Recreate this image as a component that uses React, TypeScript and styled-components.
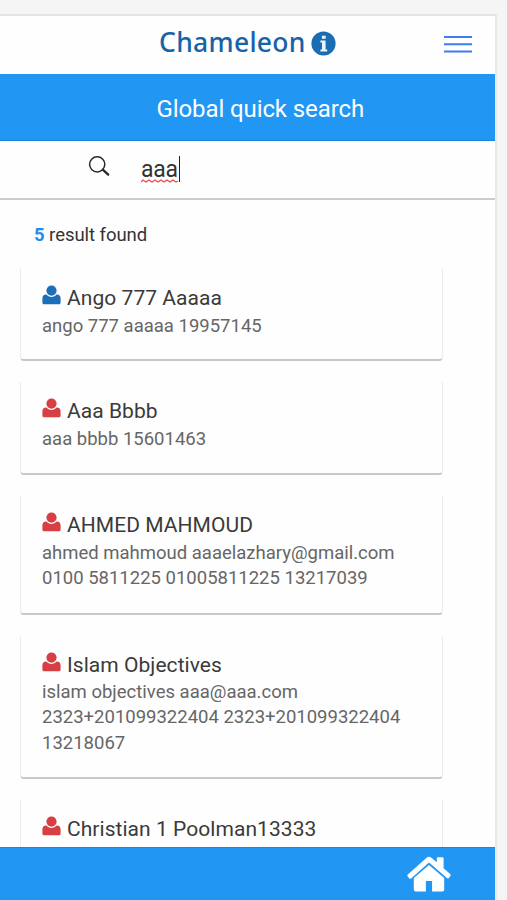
import React from 'react';
import styled, { createGlobalStyle } from 'styled-components';

const GlobalStyle = createGlobalStyle`
  * { box-sizing: border-box; }
  body { margin: 0; background: #f5f5f5; font-family: Roboto, "Liberation Sans", sans-serif; overflow: hidden; }
`;

const Page = styled.div`
  height: 900px;
  width: 507px;
  padding-top: 14px;
  background: #f5f5f5;
`;

const Phone = styled.main`
  width: 497px;
  height: 886px;
  border-top: 2px solid #e5e5e5;
  border-right: 2px solid #e8e8e8;
  background: #fefefe;
  display: flex;
  flex-direction: column;
`;

const Header = styled.header`
  height: 58px;
  flex: none;
  display: flex;
  align-items: center;
  padding: 0 23px 2px 159px;
`;

const Brand = styled.div`
  display: flex;
  align-items: center;
  gap: 5px;
  width: 180px;
`;

const BrandName = styled.span`
  width: 147px;
  margin-top: -4px;
  font: 500 26.5px/36px "Noto Sans", sans-serif;
  letter-spacing: 0.3px;
  color: #1663a8;
  white-space: nowrap;
`;

const MenuButton = styled.button`
  margin: 2px 0 0 auto;
  padding: 0;
  border: 0;
  background: none;
  display: flex;
`;

const TitleBar = styled.h1`
  margin: 0;
  height: 67px;
  flex: none;
  background: #2196f3;
  border-bottom: 1px solid #1a83dc;
  color: #fff;
  font-size: 24px;
  letter-spacing: -0.1px;
  line-height: 70px;
  font-weight: 400;
  padding-left: 156.5px;
  white-space: nowrap;
`;

const SearchBar = styled.div`
  height: 59px;
  flex: none;
  border-bottom: 2px solid #cccccc;
  display: flex;
  align-items: flex-start;
  padding: 15px 0 0 88px;
  > svg { margin-top: -1px; }
`;

const Query = styled.div`
  display: flex;
  flex-direction: column;
  margin-left: 31px;
  width: 40px;
`;

const QueryText = styled.span`
  height: 26px;
  width: 39px;
  border-right: 1px solid #222;
  font-size: 23px;
  letter-spacing: -0.2px;
  line-height: 28px;
  color: #333;
`;

const Squiggle = styled.svg`
  margin-top: -3px;
  display: block;
`;

const Count = styled.p`
  margin: 0;
  height: 68px;
  flex: none;
  padding-left: 34px;
  font-size: 18.5px;
  letter-spacing: -0.05px;
  line-height: 70px;
  color: #333;
  b { color: #1e8df0; font-weight: 700; }
`;

const Results = styled.ul`
  list-style: none;
  margin: 0;
  padding: 0 0 0 20px;
  flex: 1;
  min-height: 0;
  overflow: hidden;
  display: flex;
  flex-direction: column;
  gap: 21px;
`;

const Card = styled.li<{ $height: number }>`
  width: 423px;
  height: ${(p) => p.$height}px;
  flex: none;
  border: solid #ececec;
  border-width: 0 1px 2px 1px;
  border-bottom-color: #c8c8c8;
  border-radius: 0 0 4px 4px;
  padding: 15px 0 0 21px;

  &:first-child { padding-top: 16px; }
`;

const Name = styled.h2<{ $tone: string; $gap: number }>`
  margin: 0 0 ${(p) => p.$gap}px;
  height: 29px;
  display: flex;
  align-items: flex-start;
  gap: 6px;
  font-size: 21px;
  letter-spacing: 0.05px;
  line-height: 28px;
  font-weight: 400;
  color: #3a3a3a;
  white-space: nowrap;
  svg { color: ${(p) => p.$tone}; margin-top: 1px; }
`;

const Detail = styled.p`
  margin: 0;
  font-size: 18.5px;
  line-height: 25.3px;
  color: #666;
  white-space: nowrap;
`;

const Footer = styled.footer`
  height: 53px;
  flex: none;
  background: #2196f3;
  border-top: 1px solid #1a86df;
  display: flex;
  justify-content: flex-end;
  align-items: flex-start;
  padding: 8px 43px 0 0;
`;

const InfoIcon = () => (
  <svg width="26" height="26" viewBox="0 0 26 26">
    <circle cx="12.5" cy="12.5" r="12.1" fill="#1b6db3" />
    <path d="M10.9 4.8h3.8v3h-3.8zM9.4 9.6h5.2v9h1.6v2H9.4v-2H11v-7H9.4z" fill="#e6f5ff" />
  </svg>
);

const MenuIcon = () => (
  <svg width="28" height="20" viewBox="0 0 28 20" fill="#3f7cf0">
    <path d="M0 1h28v2H0zM0 8.2h28v2H0zM0 15.4h28v2H0z" />
  </svg>
);

const SearchIcon = () => (
  <svg width="22" height="22" viewBox="0 0 22 22" fill="none" stroke="#292929">
    <circle cx="9.2" cy="9.3" r="7.6" strokeWidth="1.5" />
    <path d="M14.8 14.6l5.4 5" strokeWidth="2.3" strokeLinecap="round" />
  </svg>
);

const PersonIcon = () => (
  <svg width="19" height="20" viewBox="0 0 19 20" fill="currentColor">
    <circle cx="9.5" cy="5.6" r="5.1" />
    <path d="M4 9.5h.5c1.2 1.6 2.9 2.5 5 2.5s3.8-.9 5-2.5h.5c2.2 0 3.6 1.5 3.6 3.8v4.1c0 1.2-.8 1.9-2 1.9H2.4c-1.2 0-2-.7-2-1.9v-4.1C.4 11 1.8 9.5 4 9.5z" />
  </svg>
);

const HomeIcon = () => (
  <svg width="46" height="37" viewBox="0 0 46 37" fill="#fff">
    <path d="M23 9l15.2 13.1v11.4q0 2-2 2H26.1V25h-6.2v10.5H9.8q-2 0-2-2V22.1z" />
    <path d="M20.9 1.5q2.1-1.5 4.2 0l5.7 4.8V2.2q0-1 1-1h4.8q1 0 1 1v10l6.6 5.9q1 1 .1 2l-1.4 1.8q-.9 1-2 .1L23 6.6 5.1 22.4q-1.1.9-2-.1l-1.4-1.8q-.9-1 .1-2z" />
  </svg>
);

const BLUE = '#1b6fb8';
const RED = '#d63f43';

const people = [
  { name: 'Ango 777 Aaaaa', tone: BLUE, height: 93, gap: 1, lines: ['ango 777 aaaaa 19957145'] },
  { name: 'Aaa Bbbb', tone: RED, height: 93, gap: 1, lines: ['aaa bbbb 15601463'] },
  { name: 'AHMED MAHMOUD', tone: RED, height: 119, gap: 1, lines: ['ahmed mahmoud aaaelazhary@gmail.com', '0100 5811225 01005811225 13217039'] },
  { name: 'Islam Objectives', tone: RED, height: 143, gap: 0, lines: ['islam objectives aaa@aaa.com', '2323+201099322404 2323+201099322404', '13218067'] },
  { name: 'Christian 1 Poolman13333', tone: RED, height: 93, gap: 0, lines: [] },
];

export default function App() {
  return (
    <Page>
      <GlobalStyle />
      <Phone>
        <Header>
          <Brand>
            <BrandName>Chameleon</BrandName>
            <InfoIcon />
          </Brand>
          <MenuButton aria-label="Menu"><MenuIcon /></MenuButton>
        </Header>
        <TitleBar>Global quick search</TitleBar>
        <SearchBar>
          <SearchIcon />
          <Query>
            <QueryText>aaa</QueryText>
            <Squiggle width="38" height="4" viewBox="0 0 38 4" fill="none" stroke="#ee4a4a" strokeWidth="1.2">
              <path d="M0 3l2-2 3 2 3-2 3 2 3-2 3 2 3-2 3 2 3-2 3 2 3-2 3 2 2-1" />
            </Squiggle>
          </Query>
        </SearchBar>
        <Count><b>5</b> result found</Count>
        <Results>
          {people.map((p) => (
            <Card key={p.name} $height={p.height}>
              <Name $tone={p.tone} $gap={p.gap}><PersonIcon />{p.name}</Name>
              {p.lines.map((line) => <Detail key={line}>{line}</Detail>)}
            </Card>
          ))}
        </Results>
        <Footer><HomeIcon /></Footer>
      </Phone>
    </Page>
  );
}
